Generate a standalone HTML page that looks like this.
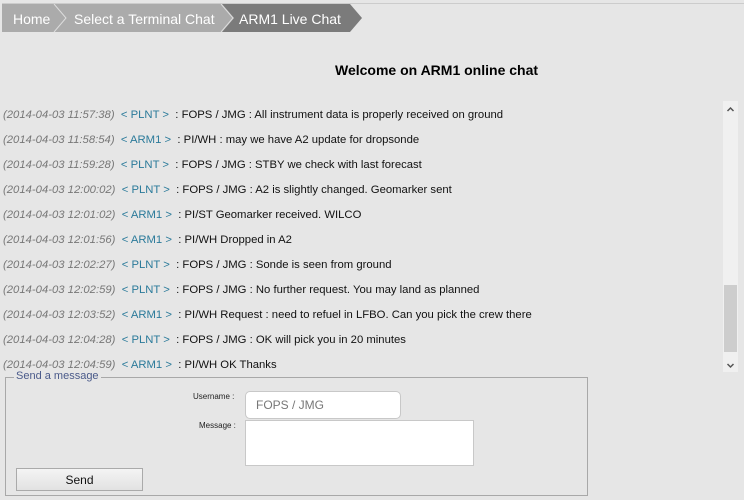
<!DOCTYPE html>
<html><head><style>
body{margin:0;width:744px;height:500px;background:#e6e6e6;font-family:"Liberation Sans",sans-serif;position:relative;overflow:hidden}
.seg{position:absolute;top:5px;height:28px;line-height:28px;color:#fff;font-size:14px}
.row{position:absolute;left:3px;font-size:11.3px;color:#111;white-space:nowrap}
.ts{font-style:italic;color:#777}
.tg{color:#2a7a9a}
</style></head><body>
<div style="position:absolute;top:3px;left:2px;width:742px;height:1px;background:#ccc"></div>
<svg style="position:absolute;top:4px;left:2px" width="362" height="29">
<polygon points="0,0 220,0 232,14 220,28 0,28" fill="#ababab"/>
<polygon points="220,0 348,0 360,14 348,28 220,28 232,14" fill="#7b7b7b"/>
<polyline points="52,0 64,14 52,28" fill="none" stroke="#ddd" stroke-width="1"/>
<polyline points="219,0 231,14 219,28" fill="none" stroke="#ddd" stroke-width="1"/>
</svg>
<div class="seg" style="left:13px">Home</div>
<div class="seg" style="left:74px">Select a Terminal Chat</div>
<div class="seg" style="left:239px">ARM1 Live Chat</div>
<div style="position:absolute;top:62px;left:335px;font-size:14px;font-weight:bold">Welcome on ARM1 online chat</div>

<div class="row" style="top:109px"><span class="ts">(2014-04-03 11:57:38)</span>&nbsp; <span class="tg">&lt; PLNT &gt;</span> &nbsp;: FOPS / JMG : All instrument data is properly received on ground</div>
<div class="row" style="top:134px"><span class="ts">(2014-04-03 11:58:54)</span>&nbsp; <span class="tg">&lt; ARM1 &gt;</span> &nbsp;: PI/WH : may we have A2 update for dropsonde</div>
<div class="row" style="top:159px"><span class="ts">(2014-04-03 11:59:28)</span>&nbsp; <span class="tg">&lt; PLNT &gt;</span> &nbsp;: FOPS / JMG : STBY we check with last forecast</div>
<div class="row" style="top:184px"><span class="ts">(2014-04-03 12:00:02)</span>&nbsp; <span class="tg">&lt; PLNT &gt;</span> &nbsp;: FOPS / JMG : A2 is slightly changed. Geomarker sent</div>
<div class="row" style="top:209px"><span class="ts">(2014-04-03 12:01:02)</span>&nbsp; <span class="tg">&lt; ARM1 &gt;</span> &nbsp;: PI/ST Geomarker received. WILCO</div>
<div class="row" style="top:234px"><span class="ts">(2014-04-03 12:01:56)</span>&nbsp; <span class="tg">&lt; ARM1 &gt;</span> &nbsp;: PI/WH Dropped in A2</div>
<div class="row" style="top:259px"><span class="ts">(2014-04-03 12:02:27)</span>&nbsp; <span class="tg">&lt; PLNT &gt;</span> &nbsp;: FOPS / JMG : Sonde is seen from ground</div>
<div class="row" style="top:284px"><span class="ts">(2014-04-03 12:02:59)</span>&nbsp; <span class="tg">&lt; PLNT &gt;</span> &nbsp;: FOPS / JMG : No further request. You may land as planned</div>
<div class="row" style="top:309px"><span class="ts">(2014-04-03 12:03:52)</span>&nbsp; <span class="tg">&lt; ARM1 &gt;</span> &nbsp;: PI/WH Request : need to refuel in LFBO. Can you pick the crew there</div>
<div class="row" style="top:334px"><span class="ts">(2014-04-03 12:04:28)</span>&nbsp; <span class="tg">&lt; PLNT &gt;</span> &nbsp;: FOPS / JMG : OK will pick you in 20 minutes</div>
<div class="row" style="top:359px"><span class="ts">(2014-04-03 12:04:59)</span>&nbsp; <span class="tg">&lt; ARM1 &gt;</span> &nbsp;: PI/WH OK Thanks</div>

<div style="position:absolute;left:723px;top:101px;width:15px;height:271px;background:#f0f0f0"></div>
<div style="position:absolute;left:724px;top:285px;width:13px;height:67px;background:#cdcdcd"></div>
<svg style="position:absolute;left:723px;top:101px" width="15" height="271">
<polyline points="4.5,10 7.5,7 10.5,10" fill="none" stroke="#555" stroke-width="1.5"/>
<polyline points="4.5,263 7.5,266 10.5,263" fill="none" stroke="#555" stroke-width="1.5"/>
</svg>

<div style="position:absolute;left:5px;top:377px;width:581px;height:117px;border:1px solid #a8a8a8"></div>
<div style="position:absolute;left:14px;top:370px;background:#e6e6e6;padding:0 2px;font-size:11px;color:#4a5a8a">Send a message</div>
<div style="position:absolute;left:193px;top:392px;font-size:8px;color:#222">Username :</div>
<div style="position:absolute;left:199px;top:421px;font-size:8px;color:#222">Message :</div>
<div style="position:absolute;left:245px;top:391px;width:156px;height:28px;background:#fff;border:1px solid #c8c8c8;border-radius:5px;box-sizing:border-box;padding-left:10px;line-height:26px;font-size:12px;color:#777">FOPS / JMG</div>
<div style="position:absolute;left:245px;top:420px;width:229px;height:46px;background:#fff;border:1px solid #c8c8c8;box-sizing:border-box"></div>
<div style="position:absolute;left:16px;top:468px;width:127px;height:23px;background:linear-gradient(#f4f4f4,#e2e2e2);border:1px solid #aaa;box-sizing:border-box;text-align:center;line-height:22px;font-size:12px;color:#111">Send</div>
</body></html>
